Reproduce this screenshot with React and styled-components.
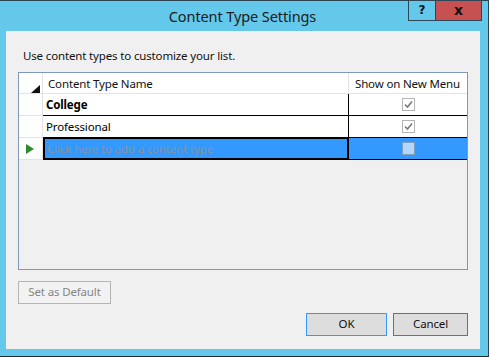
import styled, { createGlobalStyle } from "styled-components";

const GlobalStyle = createGlobalStyle`
	html, body {
		margin: 0;
		padding: 0;
		background: #ffffff;
	}
	body {
		font-family: "Noto Sans", "Open Sans", sans-serif;
		font-size: 11.5px;
		letter-spacing: -0.15px;
		color: #000000;
	}
`;

const rows = [
	{ name: "College", bold: true, checked: true },
	{ name: "Professional", bold: false, checked: true },
];

const CheckBox = ({ checked, active }) => (
	<Box $active={active}>
		{checked && (
			<svg width="11" height="11" viewBox="0 0 11 11">
				<path d="M2 5.5 L4.5 8 L9 2.5" fill="none" stroke="#7a7a7a" strokeWidth="1.6" />
			</svg>
		)}
	</Box>
);

const App = () => {
	return (
		<>
			<GlobalStyle />
			<Window>
				<TitleBar>
					<span />
					<Title>Content Type Settings</Title>
					<Controls>
						<CtrlBtn $w={28}>?</CtrlBtn>
						<CtrlBtn $w={46} $close>x</CtrlBtn>
					</Controls>
				</TitleBar>
				<Client>
					<Label>Use content types to customize your list.</Label>
					<Grid>
						<Row>
							<RowHead>
								<Corner />
							</RowHead>
							<HeadCell>Content Type Name</HeadCell>
							<HeadCell>Show on New Menu</HeadCell>
						</Row>
						{rows.map((r) => (
							<Row key={r.name}>
								<RowHead />
								<Cell $bold={r.bold}>{r.name}</Cell>
								<Cell $center>
									<CheckBox checked={r.checked} />
								</Cell>
							</Row>
						))}
						<Row>
							<RowHead>
								<Arrow />
							</RowHead>
							<Cell $selected $focus>
								Click here to add a content type
							</Cell>
							<Cell $selected $center>
								<CheckBox active />
							</Cell>
						</Row>
					</Grid>
					<Button $disabled $w={93}>Set as Default</Button>
					<Footer>
						<Button $w={81} $primary>OK</Button>
						<Button $w={75}>Cancel</Button>
					</Footer>
				</Client>
			</Window>
		</>
	);
};

const Window = styled.div`
	width: 489px;
	height: 357px;
	box-sizing: border-box;
	background: #63c8ea;
	border-top: 1px solid #2c4452;
	border-right: 1px solid #2c4452;
	border-bottom: 1px solid #1f2a30;
	display: flex;
	flex-direction: column;
`;

const TitleBar = styled.div`
	height: 30px;
	display: grid;
	grid-template-columns: 1fr auto 1fr;
	align-items: start;
`;

const Title = styled.div`
	font-family: "Noto Sans", sans-serif;
	font-size: 14.5px;
	letter-spacing: -0.1px;
	line-height: 20px;
	margin-top: 5px;
	margin-left: -3px;
	color: #1a1a1a;
	white-space: nowrap;
`;

const Controls = styled.div`
	display: flex;
	justify-content: flex-end;
	margin-top: -1px;
	margin-right: 6px;
`;

const CtrlBtn = styled.div`
	width: ${(p) => p.$w}px;
	height: 21px;
	box-sizing: border-box;
	border: 1px solid #2f4757;
	border-left-width: ${(p) => (p.$close ? 0 : 1)}px;
	background: ${(p) => (p.$close ? "#c75050" : "#63c8ea")};
	display: flex;
	align-items: center;
	justify-content: center;
	font-family: "DejaVu Sans", sans-serif;
	font-weight: bold;
	font-size: ${(p) => (p.$close ? 14 : 12)}px;
	letter-spacing: 0;
	color: #111;
	line-height: 1;
	padding-bottom: 2px;
`;

const Client = styled.div`
	margin-left: 6px;
	width: 474px;
	height: 318px;
	box-sizing: border-box;
	background: #f0f0f0;
	padding: 17px 12px 12px 12px;
	display: flex;
	flex-direction: column;
	align-items: flex-start;
`;

const Label = styled.div`
	line-height: 16px;
	margin-left: 5px;
	color: #111;
`;

const Grid = styled.div`
	margin-top: 8px;
	width: 450px;
	height: 198px;
	box-sizing: border-box;
	border: 1px solid #7d98b8;
	background: #f0f0f0;
`;

const Row = styled.div`
	display: grid;
	grid-template-columns: 24px 306px 118px;
	height: 22px;
	&:first-child {
		height: 21px;
	}
`;

const RowHead = styled.div`
	box-sizing: border-box;
	background: #ffffff;
	border-right: 1px solid #e3e3e3;
	border-bottom: 1px solid #e3e3e3;
	position: relative;
	display: flex;
	align-items: center;
	justify-content: center;
`;

const Corner = styled.div`
	position: absolute;
	right: 2px;
	bottom: 0px;
	width: 0;
	height: 0;
	border-left: 9px solid transparent;
	border-bottom: 8px solid #111;
`;

const Arrow = styled.div`
	width: 0;
	height: 0;
	border-top: 5px solid transparent;
	border-bottom: 5px solid transparent;
	border-left: 8px solid #2e8b2e;
	margin-left: -2px;
`;

const HeadCell = styled.div`
	box-sizing: border-box;
	background: #ffffff;
	border-right: 1px solid #e3e3e3;
	border-bottom: 1px solid #e3e3e3;
	padding-left: 5px;
	display: flex;
	align-items: center;
	white-space: nowrap;
	color: #111;
	&:last-child {
		border-right: 0;
		padding-left: 6px;
	}
`;

const Cell = styled.div`
	box-sizing: border-box;
	background: ${(p) => (p.$selected ? "#3399ff" : "#ffffff")};
	color: ${(p) => (p.$selected ? "#8a8f96" : "#000")};
	font-weight: ${(p) => (p.$bold ? "bold" : "normal")};
	border-right: 1px solid #000;
	border-bottom: 1px solid #000;
	${(p) => p.$focus && "border: 2px solid #000; margin-top: -1px; height: 23px;"}
	padding-left: ${(p) => (p.$focus ? 2 : 3)}px;
	display: flex;
	align-items: center;
	justify-content: ${(p) => (p.$center ? "center" : "flex-start")};
	white-space: nowrap;
	&:last-child {
		border-right: 0;
		padding-left: 0;
	}
`;

const Box = styled.div`
	width: 13px;
	height: 13px;
	box-sizing: border-box;
	border: 1px solid ${(p) => (p.$active ? "#7f9fbf" : "#b5b5b5")};
	background: ${(p) => (p.$active ? "#b3d6ff" : "#ffffff")};
	display: flex;
	align-items: center;
	justify-content: center;
	margin-left: 1px;
`;

const Button = styled.div`
	width: ${(p) => p.$w}px;
	height: 23px;
	box-sizing: border-box;
	border: 1px solid ${(p) => (p.$disabled ? "#b5b5b5" : p.$primary ? "#3399ff" : "#707070")};
	background: ${(p) => (p.$disabled ? "#f2f2f2" : "#dddddd")};
	color: ${(p) => (p.$disabled ? "#858585" : "#111")};
	display: flex;
	align-items: center;
	justify-content: center;
	line-height: 1;
	padding-bottom: 1px;
	margin-top: 11px;
`;

const Footer = styled.div`
	align-self: stretch;
	display: flex;
	justify-content: flex-end;
	gap: 6px;
	margin-top: -1px;

	${Button} {
		margin-top: 10px;
	}
`;

export default App;
